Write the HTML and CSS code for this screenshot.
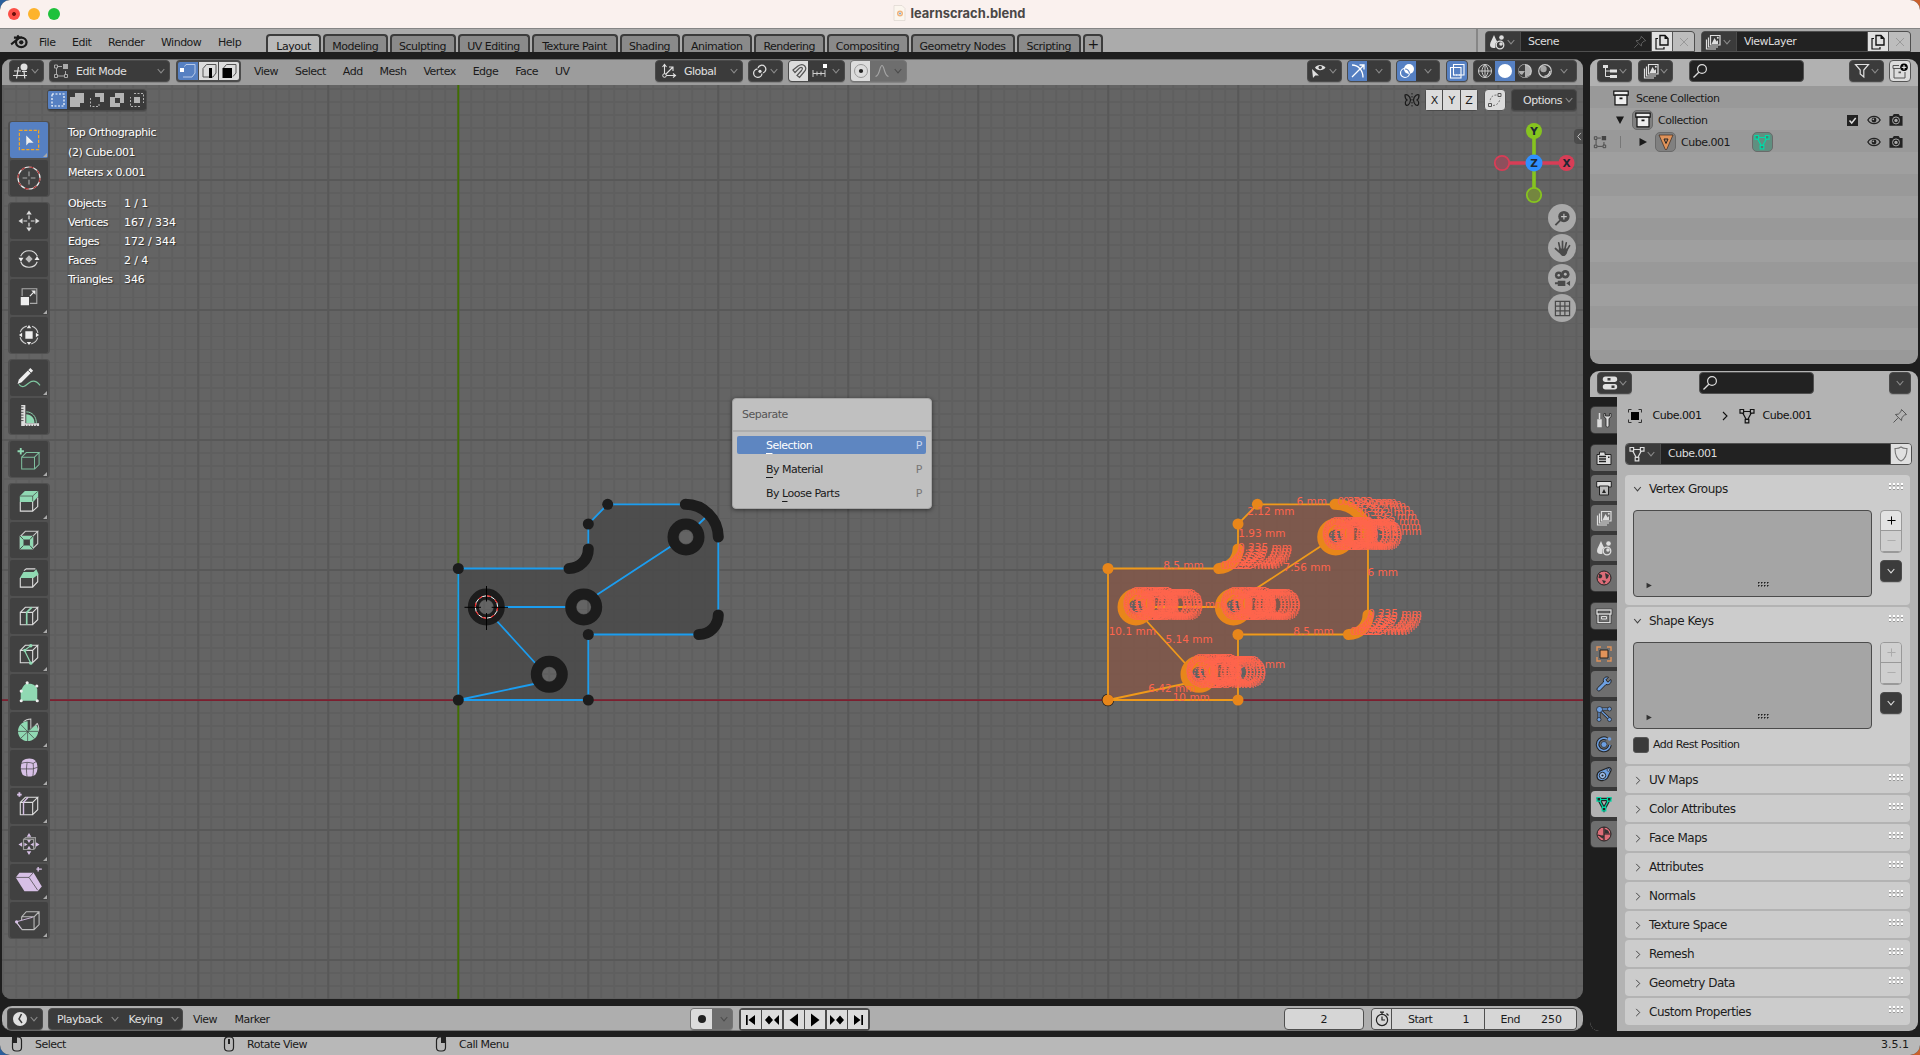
FILE: index.html
```html
<!DOCTYPE html>
<html lang="en">
<head>
<meta charset="utf-8">
<title>learnscrach.blend</title>
<link rel="stylesheet" href="styles.css">
</head>
<body>
<svg class="sprite" aria-hidden="true">
  <symbol id="chev" viewBox="0 0 8 6"><path d="M.7 1 4 4.8 7.3 1" fill="none" stroke="currentColor" stroke-width="1.1"/></symbol>
  <symbol id="chevr" viewBox="0 0 6 10"><path d="M1 1 5 5 1 9" fill="none" stroke="currentColor" stroke-width="1.1"/></symbol>
  <symbol id="search" viewBox="0 0 16 16"><circle cx="10" cy="6" r="4.4" fill="none" stroke="currentColor" stroke-width="1.2"/><path d="M6.8 9.2 1.5 14.5" stroke="currentColor" stroke-width="1.3"/></symbol>
  <symbol id="dup" viewBox="0 0 16 16"><path d="M6 1.5h5l3 3V11H6z" fill="none" stroke="#111" stroke-width="1.4"/><path d="M10.5 1v4H14z" fill="#111"/><path d="M4 4.5H2V15h8v-2" fill="none" stroke="#111" stroke-width="1.2"/></symbol>
  <symbol id="cross" viewBox="0 0 16 16"><path d="m4 4 8 8m0-8-8 8" stroke="#999" stroke-width="1"/></symbol>
  <symbol id="pin" viewBox="0 0 16 16"><path d="m9.500 1.500 5 5-2 .5-2.600 2.600-.4 3-6.100-6.100 3-.4L9 3.500zM5.800 10.200 1.500 14.500" fill="none" stroke="currentColor" stroke-width="1"/></symbol>
  <symbol id="scene" viewBox="0 0 16 16"><path d="M5 1C3.500 5 1 8 1 11c0 2 1.500 3 3.500 3 1 0 1.500-.2 2-.6C6 10 7 8 8.200 7.500 7 5.500 5.800 3 5 1z" fill="currentColor"/><circle cx="12.500" cy="3.500" r="2.300" fill="currentColor"/><circle cx="11" cy="11" r="3.800" fill="none" stroke="currentColor" stroke-width="1.300"/><circle cx="12" cy="10" r="1.800" fill="currentColor"/></symbol>
  <symbol id="images" viewBox="0 0 16 16"><path d="M5.500 1.500H15v9.500H5.500z" fill="none" stroke="currentColor" stroke-width="1.200"/><path d="m6.500 10 3-6 2.200 3.500L13 6v4z" fill="currentColor"/><circle cx="12.800" cy="3.700" r="1" fill="currentColor"/><path d="M3.500 3.500V13H13M1.500 5.500V15H11" fill="none" stroke="currentColor" stroke-width="1.200"/></symbol>
  <symbol id="view3d" viewBox="0 0 16 16"><circle cx="11" cy="4" r="3.500" fill="currentColor"/><path d="M1 8h7M0 12.500h14M5.500 4 3.500 15.500M11 8.500l.8 7M9 8.500h5" stroke="currentColor" stroke-width="1.200" fill="none"/></symbol>
  <symbol id="editmode" viewBox="0 0 16 16"><path d="M3.500 5v6m1.500 2h6m1.500-5v3.500M5 3.500h4" stroke="currentColor" stroke-width="1" fill="none"/><path d="M1.500 2h3v3h-3zM1.500 11.500h3v3h-3zM11.500 11.500h3v3h-3z" fill="none" stroke="currentColor"/><path d="M10 1h5v5h-5z" fill="currentColor"/></symbol>
  <symbol id="axes" viewBox="0 0 16 16"><path d="M3.500 13V2M4 12.500h10.500M4 12l7.500-7.500M1.500 4l2-2.500 2 2.500M12 10.500l2.500 2-2.500 2M8 4h4v4" fill="none" stroke="currentColor" stroke-width="1.100"/><circle cx="3.500" cy="12.500" r="1.800" fill="#3b3b3b" stroke="currentColor"/></symbol>
  <symbol id="pivot" viewBox="0 0 16 16"><path d="M6 5a4 4 0 1 1 5 5M10 10.500A4.200 4.200 0 1 1 5.500 6" fill="none" stroke="currentColor" stroke-width="1.300"/><circle cx="8" cy="8.300" r="1.600" fill="currentColor"/></symbol>
  <symbol id="magnet" viewBox="0 0 16 16"><path d="M2 7 7 3c6-4 10 2 6 6l-4.500 5.500-2.500-2 4.500-5C12.500 5 10.500 3.500 8.500 5L4 9.500z" fill="none" stroke="#555" stroke-width="1.200"/></symbol>
  <symbol id="incr" viewBox="0 0 16 16"><path d="M1 7v7M5 8.500v4M9 8.500v4M13 7v7M1 10.500h12" stroke="currentColor" fill="none"/><path d="M11 1h4v4h-4z" fill="#fff"/></symbol>
  <symbol id="prop" viewBox="0 0 16 16"><circle cx="8" cy="8" r="6.500" fill="none" stroke="#999"/><circle cx="8" cy="8" r="2.100" fill="#222"/></symbol>
  <symbol id="curve" viewBox="0 0 16 16"><path d="M1.500 13.500C6 13 5.500 2.500 8 2.500s2 10.500 6.500 11" fill="none" stroke="#a5a5a5" stroke-width="1.200"/></symbol>
  <symbol id="visib" viewBox="0 0 16 16"><path d="M4 4.500C6 1 12 1 14.500 4.500 12 8 6 8 4 4.500z" fill="currentColor"/><circle cx="9.200" cy="4.500" r="1.700" fill="#3b3b3b"/><path d="m1 6 1 9 2.200-2.500H8z" fill="currentColor"/></symbol>
  <symbol id="gizmo" viewBox="0 0 16 16"><path d="M2 2c6 0 11 5 11 12.500M2 14 13.500 2.500M9.500 2h4.500v4.500" fill="none" stroke="#fff" stroke-width="1.300"/></symbol>
  <symbol id="overlay" viewBox="0 0 16 16"><circle cx="10" cy="6" r="5" fill="#fff"/><circle cx="6" cy="10" r="4.500" fill="none" stroke="#fff" stroke-width="1.200"/><path d="M6 6a4.500 4.500 0 0 1 4.500 4.500" fill="none" stroke="#6287c5" stroke-width="1.200"/></symbol>
  <symbol id="xray" viewBox="0 0 16 16"><path d="M4.500 1.500H15V12H4.500zM1.500 4.500H12V15H1.500z" fill="none" stroke="#fff" stroke-width="1.100"/><path d="M4.500 6v6H11" fill="none" stroke="#fff" stroke-dasharray="1.500 1.300"/></symbol>
  <symbol id="wire" viewBox="0 0 16 16"><circle cx="8" cy="8" r="6.500" fill="none" stroke="currentColor"/><path d="M1.500 8h13M8 1.500v13M8 1.500c-4 4-4 9 0 13M8 1.500c4 4 4 9 0 13" fill="none" stroke="currentColor"/></symbol>
  <symbol id="matprev" viewBox="0 0 16 16"><circle cx="8" cy="8" r="6.300" fill="none" stroke="currentColor" stroke-width="1.200"/><path d="M8 1.500V8l5 4.500c-3 3-8 2-10 0C0 9 1.500 2 8 1.500z" fill="#3f3f3f"/><path d="M1.800 8H8v-6.200C12 2 14.500 5 14.300 8.500 14 12 11 14.500 8 14.300L8 8l-3 4C3 11 2 10 1.800 8z" fill="currentColor" opacity=".8"/></symbol>
  <symbol id="rendered" viewBox="0 0 16 16"><circle cx="8" cy="8" r="6.300" fill="none" stroke="currentColor" stroke-width="1.200"/><circle cx="6.500" cy="6" r="3.200" fill="currentColor" opacity=".75"/><path d="M13 8c-.5 3-2.500 5-5.500 5.300" fill="none" stroke="currentColor" stroke-width="1.500"/></symbol>
  <symbol id="tree" viewBox="0 0 16 16"><path d="M1 2h5v3H1zM8 6.500h7v3H8zM8 12h7v3H8z" fill="currentColor"/><path d="M3.500 5v8.500H8M3.500 8H8" fill="none" stroke="currentColor"/></symbol>
  <symbol id="filter" viewBox="0 0 16 16"><path d="M1.500 1.500h13L9.800 7v7L6.200 11V7z" fill="none" stroke="currentColor" stroke-width="1.200"/></symbol>
  <symbol id="box" viewBox="0 0 16 16"><path d="M.8 1.200h14.400v4H.8z" fill="#eee" stroke="#111" stroke-width="1.200"/><path d="M2 5.200h12v9.600H2z" fill="#eee" stroke="#111" stroke-width="1.200"/><path d="M6.500 7.500h3v1.800h-3z" fill="#111"/></symbol>
  <symbol id="newcol" viewBox="0 0 16 16"><path d="M8 5.500H1v-3h6M2 5.500V15h11V9" fill="none" stroke="#555"/><path d="M6.500 8.500h2.500v1.800H6.500z" fill="#555"/><circle cx="12" cy="4.300" r="3.800" fill="#000"/><path d="M12 2v4.600M9.700 4.300h4.600" stroke="#fff"/></symbol>
  <symbol id="eye" viewBox="0 0 16 16"><path d="M1 8C4 2.500 12 2.500 15 8 12 13.500 4 13.500 1 8z" fill="none" stroke="#222" stroke-width="1.500"/><circle cx="8" cy="8" r="2.800" fill="#222"/><circle cx="7.200" cy="7.200" r="1" fill="#aaa"/></symbol>
  <symbol id="cam" viewBox="0 0 16 16"><path d="M.5 3.500h3.500L5.500 1h5.500l1.500 2.500h3v11H.5z" fill="#222"/><circle cx="8" cy="8.500" r="4" fill="none" stroke="#aaa" stroke-width="1.100"/><circle cx="8" cy="8.500" r="1.900" fill="#aaa"/></symbol>
  <symbol id="mesh" viewBox="0 0 16 16"><path d="M3 3.500h10L8 13z" fill="none" stroke="currentColor" stroke-width="1.200"/><path d="M1 1.500h3.600v3.600H1zM11.400 1.500H15v3.600h-3.600zM6.200 11.300h3.600v3.600H6.200z" fill="var(--in,#3b3b3b)" stroke="currentColor" stroke-width="1.200"/></symbol>
  <symbol id="shield" viewBox="0 0 16 16"><path d="M8 1c2 1.500 4 1.700 6 1.500C14 9 12.500 13 8 15 3.500 13 2 9 2 2.500 4 2.700 6 2.500 8 1z" fill="none" stroke="#777" stroke-width="1.100"/></symbol>
  <symbol id="props" viewBox="0 0 16 16"><rect x=".8" y="1.500" width="14.400" height="5.500" rx="2.700" fill="currentColor"/><rect x=".8" y="9" width="14.400" height="5.500" rx="2.700" fill="currentColor"/><path d="M5.500 3h3v2.500h-3zM9.500 10.500h3V13h-3z" fill="#3b3b3b"/></symbol>
  <symbol id="clock" viewBox="0 0 16 16"><circle cx="8" cy="8" r="7" fill="currentColor"/><path d="M9.500 3 7 8l3 4" fill="none" stroke="#3b3b3b" stroke-width="1.500"/></symbol>
  <symbol id="stopw" viewBox="0 0 16 16"><circle cx="8" cy="9" r="5.600" fill="none" stroke="#222" stroke-width="1.200"/><path d="M8 5.500V9h3M6 1.200h4M8 1.200v2M12.500 2.500 14.500 4.500" fill="none" stroke="#222" stroke-width="1.200"/></symbol>
  <symbol id="tri" viewBox="0 0 10 10"><path d="M1.500 1 9 5 1.500 9z" fill="currentColor"/></symbol>
  <symbol id="plus" viewBox="0 0 10 10"><path d="M5 .5v9M.5 5h9" stroke="currentColor" stroke-width="1.100"/></symbol>
  <symbol id="minus" viewBox="0 0 10 10"><path d="M.5 5h9" stroke="currentColor"/></symbol>
  <symbol id="grip" viewBox="0 0 15 8"><g fill="#fff"><path d="M0 0h2v2H0zM4 0h2v2H4zM8 0h2v2H8zM12 0h2v2h-2zM0 4h2v2H0zM4 4h2v2H4zM8 4h2v2H8zM12 4h2v2h-2z"/></g><g fill="#888"><path d="M0 2h2v.8H0zM4 2h2v.8H4zM8 2h2v.8H8zM12 2h2v.8h-2zM0 6h2v.8H0zM4 6h2v.8H4zM8 6h2v.8H8zM12 6h2v.8h-2z"/></g></symbol>
  <symbol id="cubew" viewBox="0 0 24 24"><path d="M2.500 8h13.500v13.500H2.500zM2.500 8 8 2.500h13.500L16 8M21.500 2.500V16L16 21.500" fill="none" stroke="currentColor" stroke-width="1.200"/></symbol>
  <symbol id="blender" viewBox="0 0 16 16"><path d="M1 11 8.500 5H3.500M8.500 5 6.500 3" fill="none" stroke="#1a1a1a" stroke-width="1.800"/><ellipse cx="10" cy="9.200" rx="4.700" ry="4.200" fill="none" stroke="#1a1a1a" stroke-width="2"/><circle cx="10" cy="9.200" r="1.900" fill="#1a1a1a"/></symbol>
</svg>

<div class="window">
  <header class="titlebar">
    <div class="lights"><i class="red"></i><i class="amber"></i><i class="green"></i></div>
    <div class="doc"><svg class="docicon" viewBox="0 0 12 16"><path d="M.5.500h8l3 3v12H.5z" fill="#fbf6ee" stroke="#ddd6d0" stroke-width=".7"/><circle cx="6.500" cy="8.500" r="2.300" fill="none" stroke="#f0b27a" stroke-width="1.400"/><circle cx="6.500" cy="8.500" r=".9" fill="#6a9fd0"/></svg><b>learnscrach.blend</b></div>
  </header>

  <nav class="topbar">
    <svg class="blender"><use href="#blender"/></svg>
    <div class="menus"><span>File</span><span>Edit</span><span>Render</span><span>Window</span><span>Help</span></div>
    <div class="tabs">
      <span class="t54 active">Layout</span><span class="t64">Modeling</span><span class="t66">Sculpting</span><span class="t72">UV Editing</span><span class="t86">Texture Paint</span><span class="t60">Shading</span><span class="t70">Animation</span><span class="t70">Rendering</span><span class="t82">Compositing</span><span class="t104">Geometry Nodes</span><span class="t64">Scripting</span><span class="plus">+</span>
    </div>
    <div class="ids">
      <div class="id"><span class="idtype"><svg class="i16"><use href="#scene"/></svg><svg class="chev"><use href="#chev"/></svg></span><span class="idname">Scene<svg class="i14 dim"><use href="#pin"/></svg></span><span class="idbtn"><svg class="i16"><use href="#dup"/></svg></span><span class="idbtn off"><svg class="i16"><use href="#cross"/></svg></span></div>
      <div class="id"><span class="idtype"><svg class="i16"><use href="#images"/></svg><svg class="chev"><use href="#chev"/></svg></span><span class="idname">ViewLayer</span><span class="idbtn"><svg class="i16"><use href="#dup"/></svg></span><span class="idbtn off"><svg class="i16"><use href="#cross"/></svg></span></div>
    </div>
  </nav>

  <div class="work">
    <div class="left">
      <section class="view">
        <div class="vhead">
          <span class="btn w35"><svg class="i16"><use href="#view3d"/></svg><svg class="chev"><use href="#chev"/></svg></span>
          <span class="btn mode"><svg class="i16 dim2"><use href="#editmode"/></svg><em>Edit Mode</em><svg class="chev"><use href="#chev"/></svg></span>
          <span class="seg selmode">
            <i class="on"><svg viewBox="0 0 18 18"><path d="M5.500 4.500 7 2.500h9V11l-3 4H4" fill="none" stroke="#b9cae8"/><path d="M1 6h4v4H1z" fill="#fff"/></svg></i>
            <i><svg viewBox="0 0 18 18"><path d="M3 6.500 6.500 2.500H16V11l-3 4H3z" fill="none" stroke="#555"/><path d="M9 6h3v10H9z" fill="#000"/></svg></i>
            <i><svg viewBox="0 0 18 18"><path d="M3.500 6 6.500 2.500H16V11l-3 3.500" fill="none" stroke="#555"/><path d="M2.500 6H12v10H2.500z" fill="#000"/></svg></i>
          </span>
          <div class="menus vmenus"><span>View</span><span>Select</span><span>Add</span><span>Mesh</span><span>Vertex</span><span>Edge</span><span>Face</span><span>UV</span></div>
          <div class="vmid">
            <span class="btn w88"><svg class="i16"><use href="#axes"/></svg><em>Global</em><svg class="chev"><use href="#chev"/></svg></span>
            <span class="btn w35"><svg class="i16"><use href="#pivot"/></svg><svg class="chev"><use href="#chev"/></svg></span>
            <span class="seg dark w57"><i class="lt"><svg viewBox="0 0 16 16"><use href="#magnet"/></svg></i><svg class="i16"><use href="#incr"/></svg><svg class="chev"><use href="#chev"/></svg></span>
            <span class="seg dark faded w57"><i class="lt"><svg viewBox="0 0 16 16"><use href="#prop"/></svg></i><svg class="i16"><use href="#curve"/></svg><svg class="chev"><use href="#chev"/></svg></span>
          </div>
          <div class="vright">
            <span class="btn w35"><svg class="i16"><use href="#visib"/></svg><svg class="chev"><use href="#chev"/></svg></span>
            <span class="seg dark w44"><i class="on"><svg viewBox="0 0 16 16"><use href="#gizmo"/></svg></i><svg class="chev"><use href="#chev"/></svg></span>
            <span class="seg dark w44"><i class="on"><svg viewBox="0 0 16 16"><use href="#overlay"/></svg></i><svg class="chev"><use href="#chev"/></svg></span>
            <span class="seg dark w22"><i class="on"><svg viewBox="0 0 16 16"><use href="#xray"/></svg></i></span>
            <span class="seg dark shade"><i><svg viewBox="0 0 16 16"><use href="#wire"/></svg></i><i class="on"><svg viewBox="0 0 16 16"><circle cx="8" cy="8" r="7" fill="#fff"/></svg></i><i><svg viewBox="0 0 16 16"><use href="#matprev"/></svg></i><i><svg viewBox="0 0 16 16"><use href="#rendered"/></svg></i><svg class="chev"><use href="#chev"/></svg></span>
          </div>
        </div>

        <div class="stage">
          <svg class="canvas" viewBox="2 85 1581 914">
            <defs>
              <pattern id="minor" x="457.300" y="699" width="13" height="13" patternUnits="userSpaceOnUse"><path d="M0 0h2v13H0zM0 0h13v2H0z" fill="#5f5f5f"/></pattern>
              <pattern id="major" x="457.300" y="699" width="130" height="130" patternUnits="userSpaceOnUse"><path d="M0 0h2v130H0zM0 0h130v2H0z" fill="#585858"/></pattern>
            </defs>
            <rect x="2" y="85" width="1581" height="914" fill="#646464"/>
            <rect x="2" y="85" width="1581" height="914" fill="url(#minor)"/>
            <rect x="2" y="85" width="1581" height="914" fill="url(#major)"/>
            <path d="M2 700.100h1581" stroke="#7c1f2f" stroke-width="1.600"/>
            <path d="M458.300 85v914" stroke="#417000" stroke-width="1.800"/>
            <g id="part">
              <path class="face" fill-rule="evenodd" d="M458.300 700V568.500H569A19.500 19.500 0 0 0 588.300 549V524L607.700 504.300H685.300A33 33 0 0 1 718.300 537V615A19.500 19.500 0 0 1 698.800 634.500H588.300V700zM679 537a7 7 0 1 0 14 0 7 7 0 1 0-14 0zM576.700 607a7 7 0 1 0 14 0 7 7 0 1 0-14 0zM479.300 607a7 7 0 1 0 14 0 7 7 0 1 0-14 0zM542.300 674.300a7 7 0 1 0 14 0 7 7 0 1 0-14 0z"/>
              <path class="edge" d="M569 568.500H458.300V700H588.300V634.500H698.800M588.300 549V524L607.700 504.300H685.300M718.300 537V615M499 607H571M592 598 676 543M695 527.500 705 518M495 619 537 665M541 682.500 458.300 700"/>
              <path class="arc" d="M569 568.500A19.500 19.500 0 0 0 588.300 549M685.300 504.300A33 33 0 0 1 718.300 537M718.300 615A19.500 19.500 0 0 1 698.800 634.500"/>
              <g class="ring"><circle cx="686" cy="537" r="13"/><circle cx="583.700" cy="607" r="13"/><circle cx="486.300" cy="607" r="13"/><circle cx="549.300" cy="674.300" r="13"/></g>
              <g class="dot"><circle cx="458.300" cy="700" r="5.500"/><circle cx="588.300" cy="700" r="5.500"/><circle cx="588.300" cy="634.500" r="5.500"/><circle cx="607.700" cy="504.300" r="5.500"/><circle cx="588.300" cy="524" r="5.500"/><circle cx="458.300" cy="568.500" r="5.500"/></g>
            </g>
            <circle cx="1108" cy="700" r="6.300" fill="#222"/>
            <use href="#part" class="picked" x="649.700"/>
            <g id="lengths" class="lengths">
              <text x="1163.300" y="568.500">8.5 mm</text><text x="1238.300" y="536.700">1.93 mm</text><text x="1247.300" y="514.700">2.12 mm</text><text x="1296.500" y="504.500">6 mm</text><text x="1283.500" y="570.700">7.56 mm</text><text x="1367.500" y="575.700">6 mm</text><text x="1293.300" y="634.700">8.5 mm</text><text x="1108.700" y="634.700">10.1 mm</text><text x="1165.500" y="642.700">5.14 mm</text><text x="1148.300" y="691.700">6.42 mm</text><text x="1172.700" y="700.700">10 mm</text><text x="1238" y="667.700">5.04 mm</text><text x="1184.700" y="607.500">5.5 mm</text>
            </g>
            <g class="cursor"><circle cx="486.500" cy="607" r="11.200" stroke="#fff"/><circle cx="486.500" cy="607" r="11.200" stroke="#f00" stroke-dasharray="4 4.800"/><path stroke="#000" d="M464.500 607.300H481M491.700 607.300H508M486.500 586v15.500M486.500 613v17"/></g>
          </svg>

          <div class="vrow2">
            <span class="seg dark picks">
              <i class="on"><svg viewBox="0 0 16 16"><path d="M2 2h12v12H2z" fill="none" stroke="#fff" stroke-width="1.200" stroke-dasharray="2 1.500"/></svg></i>
              <i><svg viewBox="0 0 16 16"><path d="M6 1h9v10h-4v4H1V5h5z" fill="#b4b4b4"/></svg></i>
              <i><svg viewBox="0 0 16 16"><path d="M6 1h9v9h-4V5H6z" fill="#b4b4b4"/><path d="M1.500 6v8.500H10V11" fill="none" stroke="#b4b4b4" stroke-dasharray="2 1.500"/></svg></i>
              <i><svg viewBox="0 0 16 16"><path fill-rule="evenodd" d="M6 1h9v10h-4v4H1V5h5zM6 6v5h5V6z" fill="#b4b4b4"/></svg></i>
              <i><svg viewBox="0 0 16 16"><path d="M5 5h6v6H5z" fill="#b4b4b4"/><path d="M5 1.500h9.500V11M11 14.500H1.500V5" fill="none" stroke="#b4b4b4" stroke-dasharray="2 1.500"/></svg></i>
            </span>
            <div class="v2right">
              <svg class="i16" viewBox="0 0 16 16"><path d="M6.500 8C6 3 2 2 1 3c0 2 0 4 2 5-2 1-2 4-1 5s4 0 4.500-5zM9.500 8C10 3 14 2 15 3c0 2 0 4-2 5 2 1 2 4 1 5s-4 0-4.500-5z" fill="none" stroke="#1a1a1a" stroke-width="1.200"/><path d="M8 1v14" stroke="#1a1a1a" stroke-dasharray="1.500 1.500"/></svg>
              <span class="xyz"><i>X</i><i>Y</i><i>Z</i></span>
              <span class="lbtn"><svg class="i16" viewBox="0 0 16 16"><path d="M11 1.500h3v3h-3zM1.500 11.500h3v3h-3z" fill="none" stroke="#555"/><path d="M9.500 3C5 3 3 6 3 10M6 13.500c4 0 6.500-3 7-7" fill="none" stroke="#777" stroke-dasharray="2 1.500"/></svg></span>
              <span class="btn options"><em>Options</em><svg class="chev"><use href="#chev"/></svg></span>
            </div>
          </div>

          <div class="toolbar">
            <div class="tg">
              <i class="on"><svg viewBox="0 0 24 24"><path d="M1.500 1.500h21v21h-21z" fill="none" stroke="#f5a623" stroke-width="1.300" stroke-dasharray="3.500 1.700"/><path d="M9 7v11l2.800-3H17z" fill="#eee"/></svg><b></b></i>
              <i><svg viewBox="0 0 24 24"><circle cx="12" cy="12" r="12" fill="none" stroke="#e8e8e8" stroke-width="1.300"/><circle cx="12" cy="12" r="12" fill="none" stroke="#a33" stroke-width="1.300" stroke-dasharray="4.700 4.700"/><path d="M12 5v5M12 14v5M5 12h5M14 12h5" stroke="#aaa" stroke-width="1.200"/></svg></i>
            </div>
            <div class="tg">
              <i><svg viewBox="0 0 24 24"><path d="m12 .5 3 4.500H9zM12 23.500l3-4.500H9zM.5 12 5 9v6zM23.500 12 19 9v6z" fill="#ddd"/><path d="M12 6v4M12 14v4M6 12h4M14 12h4" stroke="#ddd" stroke-width="1.300"/></svg></i>
              <i><svg viewBox="0 0 24 24"><path d="M3 9c3-8 15-8 18 0M3 15c3 8 15 8 18 0" fill="none" stroke="#ddd" stroke-width="1.200"/><path d="m12 8 4 4-4 4-4-4z" fill="#bbb"/><path d="M.5 10.500H6L3.200 15zM18 13h5.500L20.800 9z" fill="#eee"/></svg></i>
              <i><svg viewBox="0 0 24 24"><path d="M4.500 11V3h16v16H13" fill="none" stroke="#aaa" stroke-width="1.200"/><path d="M3 12h9v9H3z" fill="#eee"/><path d="m13 11 4-4" stroke="#eee" stroke-width="1.300"/><path d="M14.500 5H19v4.500z" fill="#eee"/></svg><b></b></i>
              <i><svg viewBox="0 0 24 24"><circle cx="12" cy="12" r="10" fill="none" stroke="#ccc" stroke-width="1.200" stroke-dasharray="10 5.700" stroke-dashoffset="-3"/><path d="M8 8h8v8H8zM12 1l2.500 3.500h-5zM12 23l2.500-3.500h-5zM1 12l3.500-2.500v5zM23 12l-3.500-2.500v5z" fill="#eee"/></svg></i>
            </div>
            <div class="tg">
              <i><svg viewBox="0 0 24 24"><path d="M1 19c5 6 9-1 13-3 4-1.500 7 0 10 4" fill="none" stroke="#7fc7a0" stroke-width="1.300"/><path d="m-.5 18.500 1.500-5L13.500 1l3 3L4 16.500z" fill="#eee"/><path d="m11 3.500 3 3" stroke="#444"/></svg><b></b></i>
              <i><svg viewBox="0 0 24 24"><path d="M3.500 0H8v20h15v3H3.500z" fill="#ddd"/><path d="M3 2h3M3 5h3M3 8h3M3 11h3M3 14h3M3 17h3M8 24v-2.500M11 24v-2.500M14 24v-2.500M17 24v-2.500M20 24v-2.500" stroke="#444"/><path d="M9 19.500V10c5 0 9 4 9 9.500z" fill="#90d9b3"/><path d="M9 7.500c6.500 0 11 5 11 12" fill="none" stroke="#90d9b3"/></svg></i>
            </div>
            <div class="tg">
              <i><svg viewBox="0 0 24 24"><path d="M4 10h14v13H4zM4 10l5-5h14l-5 5M23 5v13l-5 5" fill="none" stroke="#7fbf9e" stroke-width="1.100"/><path d="M3 0v7M-.5 3.500h7" stroke="#90d9b3" stroke-width="2"/></svg><b></b></i>
            </div>
            <div class="tg">
              <i><svg viewBox="0 0 24 24"><path d="M2.500 12v10H16V12M21.500 7v10L16 22" fill="none" stroke="#ddd" stroke-width="1.200"/><path d="M2 5.500 7.500 0H22v6l-5.500 6H2z" fill="#90d9b3"/><path d="M2 5.500h14L21.500.5M16 5.500V11" fill="none" stroke="#444" stroke-width=".8"/></svg><b></b></i>
              <i><svg viewBox="0 0 24 24"><use href="#cubew" color="#ccc"/><path fill-rule="evenodd" d="M2 7.500h14.500V22H2zM6 11.500V18h7v-6.500z" fill="#90d9b3"/><path d="m2 7.500 4 4M16.500 7.500l-3.500 4M2 22l4-4M16.500 22 13 18" stroke="#444"/></svg></i>
              <i><svg viewBox="0 0 24 24"><path d="M2.500 12v10H16V12M21.500 8v8L16 22M6.500 4 9 2h10" fill="none" stroke="#ddd" stroke-width="1.200"/><path d="M2 12 6 5.500h11l3-3 2.500 5.500L17 12z" fill="#90d9b3"/></svg></i>
              <i><svg viewBox="0 0 24 24"><use href="#cubew" color="#ddd"/><path d="M9.500 21.500V8L15 2.500" fill="none" stroke="#90d9b3" stroke-width="1.800"/></svg><b></b></i>
              <i><svg viewBox="0 0 24 24"><use href="#cubew" color="#ddd"/><path d="m14 3-7 5 7 14" fill="none" stroke="#90d9b3" stroke-width="1.300"/><g fill="#90d9b3"><circle cx="14" cy="3" r="1.800"/><circle cx="7.500" cy="8" r="1.800"/><circle cx="14" cy="22" r="1.800"/></g></svg><b></b></i>
              <i><svg viewBox="0 0 24 24"><path d="M3 21.500V12C5 6 8 2 12 3c4 0 8 2 9 6v12.500z" fill="#90d9b3"/><g fill="#eee"><circle cx="10" cy="2" r="1.700"/><circle cx="20.500" cy="5.500" r="1.700"/><circle cx="3.500" cy="11" r="1.700"/><circle cx="3.500" cy="21.500" r="1.700"/><circle cx="21" cy="21.500" r="1.700"/></g></svg></i>
              <i><svg viewBox="0 0 24 24"><path d="M6 3c3-3 8-3 8-3v11l7-6c2 3 2 6 .5 9" fill="none" stroke="#ccc" stroke-width="1.100"/><path d="M10.500 13V2.500C4 3 0 8 0 13.500c0 6 5 10.500 10.500 10.500S22 20 22 13c0-2-.5-4.500-2-6.500z" fill="#90d9b3"/><path d="M0 13.500h22M10.500 13v11M3 6l15 15.500M3 21 19 6" stroke="#444" stroke-width=".8"/></svg><b></b></i>
              <i><svg viewBox="0 0 24 24"><path d="M5 4c4-3 11-3 14 0 3 4 3 11 0 15-3 3-11 3-14 0-2.500-4-2.500-11 0-15z" fill="#d7c0e6"/><path d="M3 13h13l6-2M10 22c-1-5-1-11 0-16M3.500 7c4-1.500 9-1.500 13 0l4-2.500M16 22c1-5 1-11 .5-15" fill="none" stroke="#444" stroke-width=".8"/></svg><b></b></i>
              <i><svg viewBox="0 0 24 24"><use href="#cubew" color="#ddd"/><path d="M6 21.500V8l5-5.500" fill="none" stroke="#d7c0e6" stroke-width="1.500"/><path d="M1.500-3v5M-1-.5h5" stroke="#d7c0e6" stroke-width="2"/></svg><b></b></i>
              <i><svg viewBox="0 0 24 24"><path d="M6 7h11v11H6zM6 7l2.500-2H19v11l-2 2" fill="none" stroke="#999" stroke-width="1.300"/><path d="m12 0 2.500 4h-5zM12 24l2.500-4h-5zM.5 12.500l4-2.500v5zM23.500 12.500l-4-2.500v5zM10 7.500h4L12 11zM10 17.500h4L12 14zM7 10.500v4l3.500-2zM17 10.500v4l-3.500-2z" fill="#d7c0e6"/></svg><b></b></i>
              <i><svg viewBox="0 0 24 24"><path d="m-2.500 7 4-5H17l9 15-4.500 5H7z" fill="#d7c0e6"/><path d="M-2.500 7H12l4.500-5M12 7l9.500 14" fill="none" stroke="#444" stroke-width=".8"/><path d="M20-2h6M22-4.500v5" stroke="#d7c0e6" stroke-width="1.500"/></svg><b></b></i>
              <i><svg viewBox="0 0 24 24"><path d="M4 8.500 9 3h14v14l-5.500 5.500H4.500L-2 14M17.500 8.500V22M17.500 8.500 23 3M4 8.500h13.500M4 8.500V12" fill="none" stroke="#bbb" stroke-width="1.200"/><path d="m-2 14 18-5M-2 14l5 7" stroke="#d7c0e6"/><circle cx="-1.500" cy="14" r="1.800" fill="#d7c0e6"/></svg><b></b></i>
            </div>
          </div>

          <div class="info">
            <p>Top Orthographic</p><p>(2) Cube.001</p><p>Meters x 0.001</p>
            <dl><dt>Objects</dt><dd>1 / 1</dd><dt>Vertices</dt><dd>167 / 334</dd><dt>Edges</dt><dd>172 / 344</dd><dt>Faces</dt><dd>2 / 4</dd><dt>Triangles</dt><dd>346</dd></dl>
          </div>

          <svg class="navaxes" viewBox="1492 121 84 84">
            <path d="M1504 163h60" stroke="#d83d56" stroke-width="3.600"/><path d="M1534 133v60" stroke="#86c41f" stroke-width="3.600"/>
            <circle cx="1502" cy="163" r="7.200" fill="#8e4f5c" stroke="#d83d56" stroke-width="1.800"/>
            <circle cx="1534" cy="195" r="7.200" fill="#74863f" stroke="#86c41f" stroke-width="1.800"/>
            <circle cx="1566.500" cy="163" r="8" fill="#d83d56"/><circle cx="1534" cy="131" r="8" fill="#86c41f"/><circle cx="1534" cy="163" r="8.500" fill="#2f8fff"/>
            <text x="1566.500" y="167">X</text><text x="1534" y="135">Y</text><text x="1534" y="167">Z</text>
          </svg>
          <div class="collapse"><svg viewBox="0 0 6 10"><path d="M5 1 1.500 5 5 9" fill="none" stroke="#ccc"/></svg></div>
          <div class="nav">
            <i><svg viewBox="0 0 18 18"><circle cx="10.500" cy="7" r="6" fill="#4a4a4a"/><path d="m6.500 11-5 5" stroke="#4a4a4a" stroke-width="2"/><path d="M10.500 4v6M7.500 7h6" stroke="#c5c5c5" stroke-width="1.200"/></svg></i>
            <i><svg viewBox="0 0 18 18"><path d="M6.500 10 5 3M9 9V1.500M11.500 9.500 13 3M13.500 11l3-5M6 13 1.500 9" stroke="#4a4a4a" stroke-width="1.800" stroke-linecap="round"/><path d="M5 9h9.500c0 4-1.500 8-4.500 8s-5-4-5-8z" fill="#4a4a4a"/></svg></i>
            <i><svg viewBox="0 0 18 18"><circle cx="5" cy="5.500" r="4" fill="#4a4a4a"/><circle cx="12" cy="4.500" r="4.500" fill="#4a4a4a"/><circle cx="5" cy="5.500" r="1.300" fill="#b5b5b5"/><circle cx="12" cy="4.500" r="1.500" fill="#b5b5b5"/><path d="M4 11.500h8v5.500H4zM13 14l4-2.500V17zM1 13h3v2H1z" fill="#4a4a4a"/></svg></i>
            <i><svg viewBox="0 0 18 18"><path d="M1.500 1.500h15v15h-15zM6.500 1.500v15M11.500 1.500v15M1.500 6.500h15M1.500 11.500h15" fill="none" stroke="#4a4a4a" stroke-width="1.300"/></svg></i>
          </div>

          <div class="popup">
            <h3>Separate</h3>
            <ul>
              <li class="hot"><span><u>S</u>election</span><kbd>P</kbd></li>
              <li><span><u>B</u>y Material</span><kbd>P</kbd></li>
              <li><span>By <u>L</u>oose Parts</span><kbd>P</kbd></li>
            </ul>
          </div>
        </div>
      </section>

      <section class="timeline">
        <span class="btn w36"><svg class="i16"><use href="#clock"/></svg><svg class="chev"><use href="#chev"/></svg></span>
        <span class="btn play"><em>Playback</em><svg class="chev"><use href="#chev"/></svg><em>Keying</em><svg class="chev"><use href="#chev"/></svg></span>
        <div class="menus tmenus"><span>View</span><span>Marker</span></div>
        <div class="seg dark faded rec"><i class="lt"><svg viewBox="0 0 16 16"><circle cx="8" cy="8" r="4" fill="#222"/></svg></i><svg class="chev"><use href="#chev"/></svg></div>
        <div class="transport">
          <i><svg viewBox="0 0 16 16"><path d="M3 3h1.700v10H3zM12 3v10L5.500 8z"/></svg></i>
          <i><svg viewBox="0 0 16 16"><path d="m5 3.500 4 4.500-4 4.500L1 8zM15 3v10l-5-5z"/></svg></i>
          <i><svg viewBox="0 0 16 16"><path d="M12 1.500v13L3.500 8z"/></svg></i>
          <i><svg viewBox="0 0 16 16"><path d="M4 1.500v13L12.500 8z"/></svg></i>
          <i><svg viewBox="0 0 16 16"><path d="m11 3.500 4 4.500-4 4.500L7 8zM1 3v10l5-5z"/></svg></i>
          <i><svg viewBox="0 0 16 16"><path d="M11.300 3H13v10h-1.700zM4 3v10l6.500-5z"/></svg></i>
        </div>
        <div class="frame num">2</div>
        <div class="range"><i><svg class="i16"><use href="#stopw"/></svg></i><span>Start<b>1</b></span><span>End<b>250</b></span></div>
      </section>
    </div>

    <div class="right">
      <section class="outliner">
        <div class="ohead">
          <span class="btn w35"><svg class="i16"><use href="#tree"/></svg><svg class="chev"><use href="#chev"/></svg></span>
          <span class="btn w35"><svg class="i16"><use href="#images"/></svg><svg class="chev"><use href="#chev"/></svg></span>
          <span class="find"><svg class="i16"><use href="#search"/></svg></span>
          <span class="btn w35 push"><svg class="i16"><use href="#filter"/></svg><svg class="chev"><use href="#chev"/></svg></span>
          <span class="lbtn"><svg class="i16"><use href="#newcol"/></svg></span>
        </div>
        <div class="orows">
          <div class="row r1"><svg class="i16"><use href="#box"/></svg><span>Scene Collection</span></div>
          <div class="row r2"><svg class="tri down"><use href="#tri"/></svg><span class="chip"><svg class="i16"><use href="#box"/></svg></span><span>Collection</span>
            <div class="flags"><svg class="check" viewBox="0 0 11 11"><path d="M0 0h11v11H0z" fill="#222"/><path d="m2.500 5.500 2.200 2.500 4-5" fill="none" stroke="#ddd" stroke-width="1.500"/></svg><svg class="i14"><use href="#eye"/></svg><svg class="i14"><use href="#cam"/></svg></div></div>
          <div class="row r3"><svg class="i14 em"><use href="#editmode"/></svg><span class="bar"></span><svg class="tri"><use href="#tri"/></svg><span class="chip"><svg class="i16" viewBox="0 0 16 16"><path d="M1 1h14L8.700 15.500H7.300z" fill="#e0935a" stroke="#3a2a20" stroke-width=".7"/><path d="M6 5h4L8 9.500z" fill="#c58a5e" stroke="#222"/></svg></span><span>Cube.001</span><span class="chip teal"><svg class="i16"><use href="#mesh"/></svg></span>
            <div class="flags"><svg class="i14"><use href="#eye"/></svg><svg class="i14"><use href="#cam"/></svg></div></div>
        </div>
      </section>

      <section class="props">
        <div class="phead">
          <span class="btn w35"><svg class="i16"><use href="#props"/></svg><svg class="chev"><use href="#chev"/></svg></span>
          <span class="find"><svg class="i16"><use href="#search"/></svg></span>
          <span class="btn w22 push"><svg class="chev"><use href="#chev"/></svg></span>
        </div>
        <div class="pbody">
          <div class="ptabs">
            <div><i><svg viewBox="0 0 16 16"><path d="M3.500 1v6M2 8h3v6.500H2z" fill="#ddd" stroke="#ddd" stroke-width="1.500"/><path d="M8 1.500V5l2 1.500V14c0 1.500 3 1.500 3 0V6.500L15 5V1.500h-1.500V4h-4V1.500z" fill="#ddd" stroke="#222" stroke-width=".8"/></svg></i></div>
            <div>
              <i><svg viewBox="0 0 16 16"><path d="M1 4.500h2.500V2H9v2.500h6v10H1z" fill="#ddd" stroke="#222"/><path d="M3 6.500h7M3 9h7M3 11.500h7" stroke="#222" stroke-width="1.300"/><path d="M12 6.500h1.500v1.500H12z" fill="#222"/></svg></i>
              <i><svg viewBox="0 0 16 16"><path d="M.7 1.500h14.600v5.500H.7z" fill="#ddd" stroke="#222"/><path d="M3.500 6h9v9h-9z" fill="#bbb" stroke="#222"/><path d="m6 13 2-4 2 4z" fill="#222"/></svg></i>
              <i><svg class="lite" viewBox="0 0 16 16"><use href="#images"/></svg></i>
              <i><svg class="lite" viewBox="0 0 16 16"><use href="#scene"/></svg></i>
              <i><svg viewBox="0 0 16 16"><circle cx="8" cy="8" r="7" fill="#dc6d78" stroke="#222"/><path d="M3 4c2 0 4 1 3 3s-2 1-3.500 1zM9 3l4 2-1 3-2 1zM6 10l4 1-2 3z" fill="#333"/></svg></i>
            </div>
            <div><i><svg viewBox="0 0 16 16"><path d="M1 2h14v4H1zM2 6h12v8.500H2z" fill="none" stroke="#222" stroke-width="2.600"/><path d="M1 2h14v4H1zM2 6h12v8.500H2z" fill="none" stroke="#ddd" stroke-width="1.400"/><path d="M5.500 8.500h5v2.500h-5z" fill="none" stroke="#ddd"/></svg></i></div>
            <div>
              <i><svg viewBox="0 0 16 16"><path d="M4 4h8v8H4z" fill="#e0935a" stroke="#222"/><path d="M1 5V1h4M11 1h4v4M15 11v4h-4M5 15H1v-4" fill="none" stroke="#e0935a" stroke-width="1.400"/></svg></i>
              <i><svg viewBox="0 0 16 16"><path d="M14.800 3.500 12 6.200 9.800 4l2.700-2.800c-3-1-6 1-5 4.800L1.200 12.200c-1 1.500 1 3.500 2.600 2.600L10 8.500c3.500 1 6-2 4.800-5z" fill="#6d9fe0" stroke="#222"/></svg></i>
              <i><svg viewBox="0 0 16 16"><path d="M3 3v10.500M3 3l10.500 10M3 3h10.500" stroke="#222" stroke-width="3"/><path d="M3 3v10.500M3 3l10.500 10M3 3h10.500" stroke="#6d9fe0" stroke-width="1.300"/><g fill="#6d9fe0" stroke="#222" stroke-width=".7"><circle cx="3.500" cy="3.500" r="3"/><circle cx="13.500" cy="3" r="2"/><circle cx="3" cy="13.500" r="2"/><circle cx="13.500" cy="13.500" r="2"/></g></svg></i>
              <i><svg viewBox="0 0 16 16"><path d="M11 3A6.200 6.200 0 1 0 14 9" fill="none" stroke="#222" stroke-width="3.600"/><path d="M11 3A6.200 6.200 0 1 0 14 9" fill="none" stroke="#6d9fe0" stroke-width="1.600"/><circle cx="8" cy="8.500" r="3" fill="#6d9fe0" stroke="#222" stroke-width=".7"/><circle cx="13.500" cy="3" r="1.800" fill="#6d9fe0"/></svg></i>
              <i><svg viewBox="0 0 16 16"><path d="M12.500 1.500c2 0 3 1.500 2.500 3L11.500 12C8 16.500 1 15 1 10c0-2 1-4 3-5z" fill="#6d9fe0" stroke="#222" stroke-width="1.200"/><circle cx="6.500" cy="9.500" r="3.200" fill="#9fc0ee" stroke="#222"/><circle cx="6.500" cy="9.500" r="1.100" fill="#222"/><circle cx="12.300" cy="4" r="1.300" fill="#9fc0ee" stroke="#222" stroke-width=".7"/></svg></i>
              <i class="active"><svg viewBox="0 0 16 16"><path d="M3 3.500h10L8 13z" fill="none" stroke="#222" stroke-width="3.400"/><g color="#00d6a3"><use href="#mesh"/></g></svg></i>
              <i><svg viewBox="0 0 16 16"><circle cx="8" cy="8" r="7" fill="#dc6d78" stroke="#222"/><path d="M8 1v7h6.500M8 8v6.500M2 9l6 2" fill="none" stroke="#222" stroke-width="1.200"/><path d="M8.500 3c3 .5 5 2.500 4.500 4.500h-4.500zM3.500 10.500 7.500 9v4z" fill="#333"/></svg></i>
            </div>
          </div>
          <div class="pmain">
            <div class="crumb"><svg class="i14" viewBox="0 0 14 14"><path d="M3 3h8v8H3z"/><path d="M.5 3.500v-3h3M10.500.5h3v3M13.500 10.500v3h-3M3.500 13.500h-3v-3" fill="none" stroke="#333"/></svg><span class="c1">Cube.001</span><svg class="cr"><use href="#chevr"/></svg><svg class="i16 cm"><use href="#mesh"/></svg><span class="c2">Cube.001</span><svg class="i16 pinr"><use href="#pin"/></svg></div>
            <div class="dataid"><span class="idtype"><svg class="i16"><use href="#mesh"/></svg><svg class="chev"><use href="#chev"/></svg></span><span class="idname">Cube.001</span><span class="idbtn"><svg class="i16"><use href="#shield"/></svg></span></div>
            <div class="panel vg">
              <h4><svg class="pc"><use href="#chev"/></svg>Vertex Groups<svg class="grip"><use href="#grip"/></svg></h4>
              <div class="lrow"><div class="list"><svg class="tri"><use href="#tri"/></svg><b></b></div>
                <div class="lbtns"><div class="pm"><i class="live"><svg><use href="#plus"/></svg></i><i><svg><use href="#minus"/></svg></i></div><span class="btn w22"><svg class="chev hi"><use href="#chev"/></svg></span></div></div>
            </div>
            <div class="panel sk">
              <h4><svg class="pc"><use href="#chev"/></svg>Shape Keys<svg class="grip"><use href="#grip"/></svg></h4>
              <div class="lrow"><div class="list"><svg class="tri"><use href="#tri"/></svg><b></b></div>
                <div class="lbtns"><div class="pm"><i><svg><use href="#plus"/></svg></i><i><svg><use href="#minus"/></svg></i></div><span class="btn w22"><svg class="chev hi"><use href="#chev"/></svg></span></div></div>
              <div class="rest"><i></i>Add Rest Position</div>
            </div>
            <div class="panel"><h4><svg class="pr"><use href="#chevr"/></svg>UV Maps<svg class="grip"><use href="#grip"/></svg></h4></div>
            <div class="panel"><h4><svg class="pr"><use href="#chevr"/></svg>Color Attributes<svg class="grip"><use href="#grip"/></svg></h4></div>
            <div class="panel"><h4><svg class="pr"><use href="#chevr"/></svg>Face Maps<svg class="grip"><use href="#grip"/></svg></h4></div>
            <div class="panel"><h4><svg class="pr"><use href="#chevr"/></svg>Attributes<svg class="grip"><use href="#grip"/></svg></h4></div>
            <div class="panel"><h4><svg class="pr"><use href="#chevr"/></svg>Normals<svg class="grip"><use href="#grip"/></svg></h4></div>
            <div class="panel"><h4><svg class="pr"><use href="#chevr"/></svg>Texture Space<svg class="grip"><use href="#grip"/></svg></h4></div>
            <div class="panel"><h4><svg class="pr"><use href="#chevr"/></svg>Remesh<svg class="grip"><use href="#grip"/></svg></h4></div>
            <div class="panel"><h4><svg class="pr"><use href="#chevr"/></svg>Geometry Data<svg class="grip"><use href="#grip"/></svg></h4></div>
            <div class="panel"><h4><svg class="pr"><use href="#chevr"/></svg>Custom Properties<svg class="grip"><use href="#grip"/></svg></h4></div>
          </div>
        </div>
      </section>
    </div>
  </div>

  <footer class="status">
    <span><svg viewBox="0 0 12 16"><rect x="1.500" y="1" width="9" height="14" rx="3.500" fill="none" stroke="#222" stroke-width="1.200"/><path d="M1 1h5v6H1z" fill="#222"/></svg>Select</span>
    <span><svg viewBox="0 0 12 16"><rect x="1.500" y="1" width="9" height="14" rx="3.500" fill="none" stroke="#222" stroke-width="1.200"/><path d="M5 3h2v5H5z" fill="#222"/></svg>Rotate View</span>
    <span><svg viewBox="0 0 12 16"><rect x="1.500" y="1" width="9" height="14" rx="3.500" fill="none" stroke="#222" stroke-width="1.200"/><path d="M6 1h5v6H6z" fill="#222"/></svg>Call Menu</span>
    <b class="num">3.5.1</b>
  </footer>
</div>
<script src="lengths.js"></script>
</body>
</html>
```
FILE: styles.css
```css
* { box-sizing: border-box; }
body { margin: 0; width: 1920px; height: 1055px; overflow: hidden; background: linear-gradient(90deg, #2b5f9c 50%, #c9602c 50%); font: 11px/1 "DejaVu Sans", sans-serif; letter-spacing: -.5px; color: #1a1a1a; }
i, em { font-style: normal; }
svg { display: block; flex: none; overflow: visible; }
.sprite { position: absolute; width: 0; height: 0; }
.num { letter-spacing: 0; }
.window { width: 1920px; height: 1055px; border-radius: 10px; overflow: hidden; background: #1e1e1e; display: flex; flex-direction: column; }

.titlebar { height: 29px; background: #faf1ee; border-bottom: 1px solid #858585; display: grid; grid-template-columns: 1fr auto 1fr; align-items: center; }
.lights { display: flex; gap: 8px; padding-left: 8px; }
.lights i { width: 12px; height: 12px; border-radius: 50%; }
.red { background: radial-gradient(circle, #6b0f0a 0 1.500px, #fc4f47 2.300px); }
.amber { background: #fdb32c; }
.green { background: #1ec13b; }
.doc { display: flex; align-items: center; gap: 5px; padding: 0 2px 2px 0; font: 600 12.900px "Inter", sans-serif; letter-spacing: 0; color: #4b4746; }
.doc b { font-weight: 700; }
.docicon { width: 13px; height: 16px; }

.topbar { height: 23px; background: #ababab; display: flex; align-items: center; padding: 0 9px 0 10px; }
.blender { width: 18px; height: 18px; }
.menus { display: flex; color: #1a1a1a; }
.topbar .menus { gap: 16.700px; margin-left: 11px; width: 227px; padding-top: 3px; }
.tabs { display: flex; gap: 2px; align-self: flex-end; height: 18px; }
.tabs span { height: 18px; background: #8a8a8a; border: 2px solid #3c3c3c; border-bottom: 0; border-radius: 4px 4px 0 0; display: flex; justify-content: center; align-items: center; padding-top: 4px; line-height: 13px; color: #161616; }
.tabs .active { background: #bababa; }
.tabs .plus { width: 20px; font-size: 14px; padding-top: 1px; background: #999; }
.t54 { width: 55px; } .t60 { width: 60px; } .t64 { width: 64.500px; } .t66 { width: 66px; } .t70 { width: 70.500px; } .t72 { width: 72px; } .t82 { width: 82px; } .t86 { width: 86px; } .t104 { width: 104px; }
.ids { margin-left: auto; display: flex; gap: 6px; border-left: 2px solid #868686; padding: 2px 0 0 7px; height: 23px; }
.id { width: 210px; display: flex; border: 1px solid #4f4f4f; border-radius: 4px 4px 0 0; background: #3b3b3b; overflow: hidden; }
.idtype { width: 34px; display: flex; align-items: center; justify-content: space-between; padding: 0 5px 0 3px; background: #3b3b3b; color: #ddd; }
.idname { flex: 1; background: #222; color: #ddd; display: flex; align-items: center; justify-content: space-between; padding: 0 4px 0 7px; border-left: 1px solid #4a4a4a; }
.idbtn { width: 21px; background: #e0e0e0; display: flex; align-items: center; justify-content: center; border-left: 1px solid #555; }
.idbtn.off { width: 22px; background: #bdbdbd; }
.i16 { width: 16px; height: 16px; }
.i14 { width: 14px; height: 14px; }
.dim { color: #666; } .dim2 { color: #aaa; }
.chev { width: 8px; height: 6px; color: #8a8a8a; }

.work { display: flex; gap: 7px; padding: 7px 2px 6px; height: 985px; }
.left { width: 1581px; display: flex; flex-direction: column; gap: 7px; }
.view { height: 940px; border-radius: 9px; overflow: hidden; display: flex; flex-direction: column; }
.btn { height: 22px; background: #3b3b3b; border: 1px solid #4b4b4b; border-radius: 4px; color: #e0e0e0; display: flex; align-items: center; justify-content: space-between; padding: 0 4px; box-shadow: 0 1px 0 rgba(0,0,0,.15); flex: none; }
.w22 { width: 22px; } .w35 { width: 35px; } .w36 { width: 36px; } .w44 { width: 44px; } .w57 { width: 57px; } .w88 { width: 88px; }
.btn.w22 { justify-content: center; padding: 0; }
.btn em { margin-right: auto; margin-left: 7px; }
.vhead { height: 26px; background: #9c9c9c; display: flex; align-items: flex-start; padding: 1px 6px 0 7px; box-shadow: inset 0 1px #6e6e6e; }
.vhead .w35 { padding-left: 3px; }
.mode { width: 121px; margin-left: 5px; padding-left: 3px; }
.seg { height: 22px; display: flex; align-items: stretch; border: 2px solid #4b4b4b; border-radius: 4px; background: #4b4b4b; overflow: hidden; flex: none; box-shadow: 0 1px 0 rgba(0,0,0,.15); }
.seg i { flex: 1; background: #dcdcdc; display: flex; align-items: center; justify-content: center; }
.seg i svg { width: 18px; height: 18px; }
.seg i.on { background: #5680c2; }
.selmode { width: 65px; margin-left: 6px; gap: 1px; }
.dark { background: #3b3b3b; align-items: center; justify-content: space-between; padding-right: 2px; color: #ccc; border-width: 1px; }
.dark i { flex: none; width: 19px; height: 20px; background: #3b3b3b; }
.seg.dark i svg { width: 16px; height: 16px; }
.dark i.lt { background: #dcdcdc; }
.faded { background: #6e6e6e; border-color: #757575; }
.faded .chev { color: #4c4c4c; }
.dark .chev { margin-right: 2px; }
.w44 .chev { margin: 0 8px; }
.w22.dark { padding: 0; } .w22.dark i { width: 20px; }
.vmenus { gap: 16.900px; margin: 6px 0 0 13px; width: 401px; }
.vmid { display: flex; gap: 5px; }
.w88 .i16 { margin-left: 1px; }
.vright { display: flex; gap: 5.300px; margin-left: auto; }
.seg.shade { width: 104px; justify-content: flex-start; padding: 0 0 0 1px; } .shade i { width: 20px; } .shade .chev { margin: 0 8px 0 auto; }

.stage { position: relative; flex: 1; }
.canvas { position: absolute; inset: 0; width: 1581px; height: 914px; overflow: hidden; }
.face { fill: var(--face, #494949); fill-opacity: var(--fo, .86); }
.edge { fill: none; stroke: var(--edge, #1b9df0); stroke-width: 1.800; }
.arc, .ring { fill: none; stroke: var(--vert, #1c1c1c); stroke-width: 11; stroke-linecap: round; }
.dot { fill: var(--vert, #1c1c1c); }
.picked { --face: #80584a; --fo: .9; --edge: #f09a1a; --vert: #e8861a; }
.lengths { font-size: 10.500px; fill: #ff654c; letter-spacing: 0; }
.cursor { fill: none; stroke-width: 1; }

.vrow2 { position: absolute; top: 4px; left: 45px; right: 6px; display: flex; justify-content: space-between; }
.picks { width: 100px; padding: 0; }
.picks i { width: 19px; height: 18px; }
.v2right { display: flex; align-items: center; }
.xyz { display: flex; gap: 1px; height: 22px; width: 53px; padding: 1px; background: #4b4b4b; border-radius: 4px; margin: 0 6px 0 5px; overflow: hidden; }
.xyz i { flex: 1; background: #dcdcdc; display: flex; align-items: center; justify-content: center; }
.lbtn { width: 22px; height: 22px; background: #dcdcdc; border: 1px solid #555; border-radius: 4px; display: flex; align-items: center; justify-content: center; }
.options { width: 66px; margin-left: 5px; padding-right: 3px; }

.toolbar { position: absolute; left: 6px; top: 36px; width: 42px; display: flex; flex-direction: column; gap: 5px; }
.tg { background: #505050; border-radius: 4px; padding: 1px 2px; display: flex; flex-direction: column; gap: 2px; }
.tg i { height: 36px; background: #414141; display: flex; align-items: center; justify-content: center; position: relative; border-radius: 2px; }
.tg i.on { background: #5680c2; }
.tg i svg { width: 22px; height: 22px; margin-right: 1px; }
.tg i b { position: absolute; right: 1px; bottom: 1px; border: solid transparent; border-width: 2.500px; border-right-color: #aaa; border-bottom-color: #aaa; }

.info { position: absolute; left: 66px; top: 41.500px; color: #fff; text-shadow: 1px 1px 1px rgba(0,0,0,.5); }
.info p { margin: 0 0 9px; line-height: 11px; letter-spacing: -.4px; }
.info dl { margin: 20px 0 0; display: grid; grid-template-columns: 56px auto; grid-auto-rows: 19px; }
.info dd { margin: 0; letter-spacing: -.1px; }

.navaxes { position: absolute; left: 1490px; top: 36px; width: 84px; height: 84px; }
.navaxes text { font: bold 10.500px "DejaVu Sans", sans-serif; text-anchor: middle; letter-spacing: 0; fill: #1d2733; }
.collapse { position: absolute; right: 0; top: 44px; width: 9px; height: 15px; background: #4b4b4b; border-radius: 4px 0 0 4px; padding: 3px 2px; }
.collapse svg { width: 6px; height: 9px; }
.nav { position: absolute; left: 1546px; top: 119px; display: flex; flex-direction: column; gap: 2px; }
.nav i { width: 28px; height: 28px; border-radius: 50%; background: #a9a9a9; display: flex; align-items: center; justify-content: center; }
.nav svg { width: 17px; height: 17px; }

.popup { position: absolute; left: 730px; top: 313px; width: 200px; height: 111px; background: #c0c0c0; border: 1px solid #a5a5a5; border-radius: 4px; box-shadow: 0 1px 4px rgba(0,0,0,.5); }
.popup h3 { margin: 0; height: 33px; padding: 10px 9px; font-size: 11px; font-weight: 400; color: #555; border-bottom: 2px solid #adadad; }
.popup ul { list-style: none; margin: 4px 5px 0 4px; padding: 0; display: flex; flex-direction: column; gap: 6px; }
.popup li { height: 18px; display: flex; justify-content: space-between; align-items: center; padding: 0 4px 0 29px; border-radius: 2px; }
.popup li.hot { background: #5e86c1; color: #fff; }
.popup u { text-underline-offset: 4px; text-decoration-thickness: 1px; }
.popup kbd { font: inherit; color: #777; }
.popup .hot kbd { color: #c8d6ee; }

.timeline { height: 25px; background: #aeaeae; border-radius: 10px; display: flex; padding: 2px 6px 0 5px; border-bottom: 1px solid #777; }
.play { width: 135px; margin-left: 5px; padding: 0 3px 0 1px; }
.play .chev + em { margin-left: 10px; }
.tmenus { gap: 17.500px; margin: 6px 0 0 10px; width: 497px; }
.rec { width: 43px; } .rec i.lt { width: 21px; }
.transport { margin-left: 6px; width: 131px; height: 23px; padding: 2px 1.500px; display: flex; gap: 1.500px; background: #4b4b4b; border-radius: 4px; overflow: hidden; }
.transport i { flex: 1; background: #dcdcdc; display: flex; align-items: center; justify-content: center; }
.transport svg { width: 16px; height: 16px; }
.frame { margin-left: auto; width: 80px; height: 22px; background: #d6d6d6; border: 1.500px solid #4f4f4f; border-radius: 4px; display: flex; align-items: center; justify-content: center; }
.range { margin-left: 7px; width: 206px; height: 22px; display: flex; gap: 1px; background: #4f4f4f; border: 1px solid #4f4f4f; border-radius: 4px; overflow: hidden; }
.range i { width: 19px; background: #d6d6d6; display: flex; align-items: center; justify-content: center; }
.range span { flex: 1; background: #d6d6d6; display: flex; align-items: center; justify-content: space-between; padding: 0 14px 0 16px; }
.range b { font-weight: 400; letter-spacing: 0; }

.right { width: 328px; display: flex; flex-direction: column; gap: 7px; }
.outliner { height: 305px; border-radius: 9px; overflow: hidden; }
.ohead { height: 27px; background: #b1b1b1; display: flex; gap: 6px; padding: 1px 7px 0; }
.push { margin-left: auto; }
.ohead .push { margin-right: -1px; }
.find { width: 115px; height: 22px; background: #222; border: 1px solid #4f4f4f; border-radius: 4px; color: #ddd; display: flex; align-items: center; padding-left: 2px; }
.ohead .find { margin-left: 10px; }
.orows { height: 278px; background: repeating-linear-gradient(#999 0 22px, #9f9f9f 22px 44px); }
.row { height: 22px; display: flex; align-items: center; padding-right: 15px; padding-top: 2px; }
.r1 { padding-left: 23px; gap: 7px; }
.r2 { padding-left: 25px; } .r3 { padding-left: 3px; }
.tri { width: 10px; height: 10px; }
.down { transform: rotate(90deg); }
.chip { width: 21px; height: 20px; border-radius: 5px; background: #808080; border: 1px solid #6a6a6a; display: flex; align-items: center; justify-content: center; margin: 0 5px 0 7px; }
.flags { margin-left: auto; display: flex; gap: 8px; align-items: center; }
.check { width: 11px; height: 11px; margin-right: 1px; }
.em { color: #444; }
.bar { width: 1px; height: 12px; background: #777; margin: 0 17px 0 13px; }
.chip.teal { background: #5f8f80; color: #00dba8; margin-left: 22px; --in: #4d7f70; }

.props { height: 661px; background: #b3b3b3; border-radius: 9px; overflow: hidden; display: flex; flex-direction: column; }
.phead { height: 26px; display: flex; padding: 1px 7px 0; }
.phead .find { margin-left: 67px; }
.pbody { display: flex; flex: 1; }
.ptabs { width: 27px; flex: none; background: #1e1e1e; padding-top: 9px; display: flex; flex-direction: column; gap: 10px; }
.ptabs div { background: #383838; border-radius: 5px 0 0 5px; padding: 1px 0 1px 1px; display: flex; flex-direction: column; gap: 4px; }
.ptabs i { height: 26px; background: #6e6e6e; border-radius: 4px 0 0 4px; display: flex; align-items: center; justify-content: center; }
.ptabs i.active { background: #b3b3b3; --in: #222; }
.ptabs svg { width: 16px; height: 16px; }
.lite { color: #ddd; }
.pmain { flex: 1; min-width: 0; padding: 8px 0 0 8px; display: flex; flex-direction: column; gap: 2px; }
.crumb { height: 22px; width: 287px; display: flex; align-items: center; padding-left: 3px; color: #111; --in: #b3b3b3; }
.c1 { margin-left: 10.500px; width: 69px; } .cr { width: 6px; height: 10px; } .cm { margin: 0 8px 0 11px; } .pinr { margin-left: auto; margin-right: 4px; color: #555; }
.dataid { width: 287px; height: 22px; margin: 14px 0 8px; display: flex; border: 1px solid #4f4f4f; border-radius: 4px; overflow: hidden; --in: #3b3b3b; }
.panel { width: 285px; background: #ccc; border-radius: 4px; height: 27px; flex: none; }
.panel h4 { margin: 0; height: 28px; display: flex; align-items: center; font-weight: 400; font-size: 12px; letter-spacing: -.5px; padding: 1px 6px 0 8px; color: #1d1d1d; }
.pc { width: 9px; height: 6px; margin-right: 7px; color: #444; }
.pr { width: 6px; height: 9px; margin: 0 8px 0 2px; color: #444; }
.grip { width: 15px; height: 8px; margin-left: auto; margin-top: -5px; }
.vg { height: 130px; } .sk { height: 157px; }
.lrow { display: flex; gap: 8px; padding: 7px 0 0 8px; }
.list { width: 239px; height: 87px; background: #a5a5a5; border: 1.500px solid #4b4b4b; border-radius: 4px; position: relative; }
.list .tri { position: absolute; left: 11px; bottom: 7px; width: 8px; height: 7px; color: #333; }
.list b { position: absolute; left: 124px; bottom: 8px; width: 12px; height: 6px; background: radial-gradient(circle at .7px .7px, #222 .7px, transparent 1px) 0 0/3px 3px; }
.lbtns { display: flex; flex-direction: column; gap: 7px; }
.pm { width: 22px; height: 43px; border: 1px solid #999; border-radius: 4px; overflow: hidden; }
.pm i { height: 20.500px; display: flex; align-items: center; justify-content: center; color: #aaa; border-bottom: 1px solid #999; background: #cfcfcf; }
.pm svg { width: 9px; height: 9px; }
.pm i.live { background: #e3e3e3; color: #000; box-shadow: 0 0 0 1px #4b4b4b; }
.chev.hi { color: #ddd; }
.rest { display: flex; align-items: center; gap: 4px; padding: 8px 0 0 8px; }
.rest i { width: 16px; height: 16px; background: #3b3b3b; border: 1px solid #555; border-radius: 3px; }

.status { height: 18px; background: #b8b8b8; display: flex; align-items: center; padding: 0 11px 4px; }
.status span { width: 212px; display: flex; align-items: center; gap: 12px; }
.status svg { width: 12px; height: 16px; }
.status b { margin-left: auto; font-weight: 400; }
```
FILE: lengths.js
```js
// Edge length labels: one per short segment of the rounded corners and holes.
const group = document.getElementById('lengths');
function label(x, y, text) {
  const t = document.createElementNS('http://www.w3.org/2000/svg', 'text');
  t.setAttribute('x', x.toFixed(1));
  t.setAttribute('y', y.toFixed(1));
  t.textContent = text;
  group.appendChild(t);
}
function sweep(cx, cy, r, from, to, count, text) {
  for (let i = 0; i < count; i++) {
    const a = (from + (to - from) * (i + 0.5) / count) * Math.PI / 180;
    label(cx + r * Math.cos(a), cy + r * Math.sin(a) + 0.5, text);
  }
}
sweep(1218.7, 549, 19.5, 0, 90, 10, '0.235 mm');
sweep(1348.5, 615, 19.5, 0, 90, 10, '0.235 mm');
sweep(1335, 537, 33, -90, 0, 10, '0.392 mm');
[[1335.2, 537], [1233.4, 607], [1136, 607], [1199, 674.3]].forEach(([x, y]) =>
  sweep(x, y, 13, 0, 360, 32, '0.196 mm'));
```
